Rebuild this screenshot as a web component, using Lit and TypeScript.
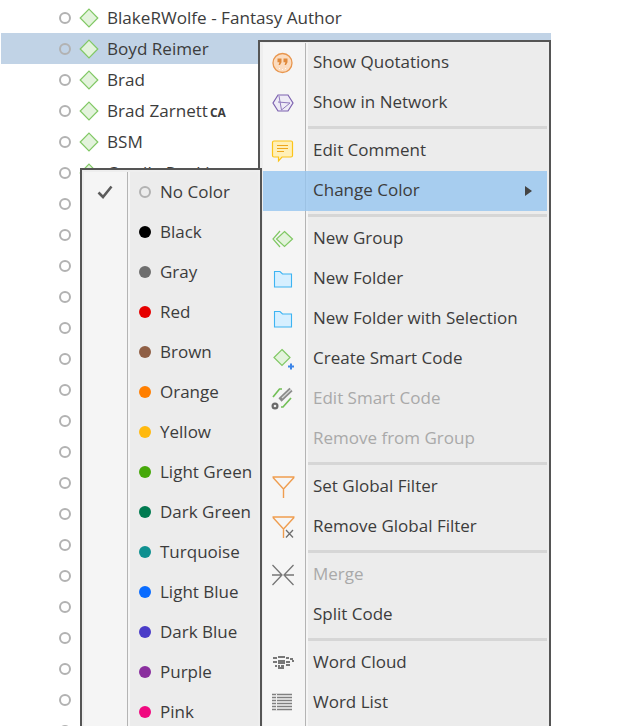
import { LitElement, html, css, svg } from "lit";
import { customElement } from "lit/decorators.js";

const diamond = html`<svg class="diamond" width="20" height="20" viewBox="0 0 20 20">
  <path d="M10 1.200 18.800 10 10 18.800 1.200 10Z" fill="#e3f3dc" stroke="#80c864" stroke-width="1.200" />
</svg>`;

const codes = ["BlakeRWolfe - Fantasy Author", "Boyd Reimer", "Brad", "Brad Zarnett", "BSM", "Camila Rankin"];
const extraRows = 18;

const colors = [
  ["No Color", ""],
  ["Black", "#000000"],
  ["Gray", "#6e6e6e"],
  ["Red", "#e60000"],
  ["Brown", "#8f5f45"],
  ["Orange", "#ff7f00"],
  ["Yellow", "#ffb90f"],
  ["Light Green", "#46a80a"],
  ["Dark Green", "#007a50"],
  ["Turquoise", "#0f9090"],
  ["Light Blue", "#0a6cff"],
  ["Dark Blue", "#4a3cc8"],
  ["Purple", "#8a2f9e"],
  ["Pink", "#f00a80"],
];

const icon = (body: unknown) =>
  html`<svg width="26" height="26" viewBox="0 0 26 26" fill="none">${body}</svg>`;

const folder = svg`<path d="M4.500 5.500H10L12.500 8H21.500V21H4.500Z" fill="#d6efff" stroke="#3db4f2" stroke-width="1.100" />`;

const funnel = svg`<path d="M2.500 3H24.500M3 3.500 13.500 15V24M24 3.500 13.500 15" stroke="#ef9d4f" stroke-width="1.400" />`;

const icons: Record<string, unknown> = {
  quote: icon(svg`<circle cx="12.500" cy="13" r="9.500" fill="#fbdcc0" stroke="#e8964e" stroke-width="1.300" />
    <path d="M7.500 8.500h4v3.700l-1.500 2.800H8.600l.8-2.800H7.500ZM13.500 8.500h4v3.700L16 15h-1.400l.8-2.800h-1.900Z" fill="#e08a3c" />
    <path d="M9 18.500h.8M12 19.500h.8M15 18.500h.8" stroke="#fff" stroke-width="1" />`),
  network: icon(svg`<path d="M8 5H18L23 13 18 21H8L3 13Z" stroke="#7d62b0" stroke-width="1.200" fill="#eeebf6" />
    <path d="M9 6 11.500 20 20 13 8 12" stroke="#8f79bd" stroke-width="1" />`),
  comment: icon(svg`<path d="M4 3H21Q22.500 3 22.500 4.500V17.500Q22.500 19 21 19H12L8.500 23V19H4Q2.500 19 2.500 17.500V4.500Q2.500 3 4 3Z" fill="#fff0b8" stroke="#fcc419" stroke-width="1.200" />
    <path d="M7 7.500H18M7 10.500H18M7 13.500H14" stroke="#efa71d" stroke-width="1.100" />`),
  group: icon(svg`<path d="M14.500 5.500 22.500 13 14.500 20.500 6.500 13Z" fill="#e3f3dc" stroke="#80c864" stroke-width="1.200" />
    <path d="M10 5 3 13 10 21" stroke="#80c864" stroke-width="1.200" />`),
  folder: icon(folder),
  smart: icon(svg`<path d="M12 3.500 20 11.500 12 19.500 4 11.500Z" fill="#e3f3dc" stroke="#80c864" stroke-width="1.200" />
    <path d="M20 17.500h2v2h2v2h-2v2h-2v-2h-2v-2h2Z" fill="#3d85e8" />`),
  editSmart: icon(svg`<path d="M3 11 9.500 3H12M11 21H13L21 12" stroke="#72bf56" stroke-width="1.700" />
    <path d="M10 14 21 3.500" stroke="#8a8a8a" stroke-width="4.500" />
    <path d="M12 12 21 3.500" stroke="#d8d8d8" stroke-width="1.200" />
    <circle cx="5" cy="20" r="3.500" fill="#6a6a6a" /><circle cx="5" cy="20" r="1.300" fill="#eee" />`),
  filter: icon(funnel),
  unfilter: icon(svg`${funnel}
    <path d="M16 16 23 23.500M23 16 16 23.500" stroke="#6e6e6e" stroke-width="1.300" />`),
  merge: icon(svg`<path d="M2.500 3 12 13 2.500 23M23.500 3 14 13 23.500 23M2 13H11M15 13H24" stroke="#757575" stroke-width="1.300" />`),
  cloud: icon(svg`<path d="M3 8h4M8 7h7M16 8h3M20 9h3M3 12h4M8 11h7M16 12h4M22 11h2M8 13h7M5 16h2M8 16h2M11 16h3M8 18h6M16 15h4" stroke="#777" stroke-width="1.800" />`),
  list: icon(svg`<path d="M2 4.500H22M2 7.500H22M2 10.500H22M2 13.500H22M2 16.500H22M2 19.500H22" stroke="#808080" stroke-width="1.400" />
    <path d="M6.500 4V20.500" stroke="#eee" stroke-width="1" />`),
};

type Entry = { label?: string; icon?: string; off?: boolean; on?: boolean; sub?: boolean; sep?: boolean };

const menu: Entry[] = [
  { label: "Show Quotations", icon: "quote" },
  { label: "Show in Network", icon: "network" },
  { sep: true },
  { label: "Edit Comment", icon: "comment" },
  { label: "Change Color", on: true, sub: true },
  { sep: true },
  { label: "New Group", icon: "group" },
  { label: "New Folder", icon: "folder" },
  { label: "New Folder with Selection", icon: "folder" },
  { label: "Create Smart Code", icon: "smart" },
  { label: "Edit Smart Code", icon: "editSmart", off: true },
  { label: "Remove from Group", off: true },
  { sep: true },
  { label: "Set Global Filter", icon: "filter" },
  { label: "Remove Global Filter", icon: "unfilter" },
  { sep: true },
  { label: "Merge", icon: "merge", off: true },
  { label: "Split Code" },
  { sep: true },
  { label: "Word Cloud", icon: "cloud" },
  { label: "Word List", icon: "list" },
];

@customElement("app-root")
export class AppRoot extends LitElement {
  static styles = css`
    :host {
      display: block;
      position: relative;
      width: 619px;
      height: 726px;
      overflow: hidden;
      background: #fff;
      font-family: "Open Sans", "Noto Sans", sans-serif;
      font-size: 17px;
      color: #3c3c3c;
    }
    .tree {
      padding-top: 2px;
      width: 550px;
      margin-left: 1px;
      font-size: 17.100px;
    }
    .row {
      height: 31px;
      display: flex;
      align-items: center;
      padding-left: 58px;
      box-sizing: border-box;
    }
    .row.sel {
      background: #c1d3e6;
    }
    .radio {
      width: 8px;
      height: 8px;
      border: 2px solid #b2b2b2;
      border-radius: 50%;
      flex: none;
    }
    .diamond {
      margin-left: 8px;
      margin-right: 8px;
      flex: none;
    }
    .tag {
      font-size: 12px;
      font-weight: 700;
      margin-left: 2px;
      margin-top: 3px;
    }
    .menu {
      position: absolute;
      box-sizing: border-box;
      border: 2px solid #555;
      background: #eeeeee;
      padding: 1px 2px 0 3px;
    }
    .main {
      left: 258px;
      top: 40px;
      width: 293px;
      height: 700px;
    }
    .colors {
      left: 80px;
      top: 168px;
      width: 182px;
      height: 570px;
      border-width: 2.500px;
      padding: 1.500px 2px 0 1.500px;
    }
    .items {
      background: linear-gradient(
        to right,
        #f5f5f5 0 42px,
        #b4b4b4 42px 43px,
        #f5f5f5 43px 45px,
        #ececec 45px
      );
      height: 100%;
    }
    .colors .items {
      background: linear-gradient(
        to right,
        #f5f5f5 0 43px,
        #b4b4b4 43px 44px,
        #f5f5f5 44px 46px,
        #ececec 46px
      );
    }
    .item {
      height: 40px;
      display: flex;
      align-items: center;
      position: relative;
    }
    .item.on {
      background: rgba(150, 197, 240, 0.8);
    }
    .item.off {
      color: #a9a9a9;
    }
    .ico {
      width: 40px;
      margin-right: 2px;
      display: flex;
      justify-content: center;
      flex: none;
    }
    .item .text {
      margin-left: 8px;
      padding-bottom: 4px;
    }
    .arrow {
      margin-left: auto;
      margin-right: 15px;
      width: 0;
      height: 0;
      border-left: 7px solid #444;
      border-top: 5.500px solid transparent;
      border-bottom: 5.500px solid transparent;
    }
    .sep {
      height: 3px;
      margin: 2.500px 0 2.500px 45px;
      background: #d6d6d6;
    }
    .check {
      width: 43px;
      display: flex;
      justify-content: center;
      flex: none;
    }
    .dot {
      width: 12px;
      height: 12px;
      border-radius: 50%;
      margin-left: 12px;
      margin-right: 9.500px;
      flex: none;
    }
    .dot.none {
      box-sizing: border-box;
      background: transparent;
      border: 2px solid #b2b2b2;
    }
    .swatch-label {
      white-space: nowrap;
    }
  `;

  renderMenuEntry(e: Entry) {
    if (e.sep) return html`<div class="sep"></div>`;
    return html`<div class="item ${e.on ? "on" : ""} ${e.off ? "off" : ""}">
      <span class="ico">${e.icon ? icons[e.icon] : ""}</span>
      <span class="text">${e.label}</span>
      ${e.sub ? html`<span class="arrow"></span>` : ""}
    </div>`;
  }

  render() {
    return html`
      <div class="tree">
        ${codes.map(
          (c, i) => html`<div class="row ${i === 1 ? "sel" : ""}">
            <span class="radio"></span>${diamond}<span>${c}</span>
            ${c === "Brad Zarnett" ? html`<span class="tag">CA</span>` : ""}
          </div>`
        )}
        ${Array.from({ length: extraRows }, () => html`<div class="row"><span class="radio"></span></div>`)}
      </div>
      <div class="menu main">
        <div class="items">${menu.map((e) => this.renderMenuEntry(e))}</div>
      </div>
      <div class="menu colors">
        <div class="items">
          ${colors.map(
            ([name, color], i) => html`<div class="item">
              <span class="check">
                ${i === 0
                  ? html`<svg width="16" height="14" viewBox="0 0 16 14">
                      <path d="M1.500 7.500 6 12 14.500 1.500" fill="none" stroke="#5c5c5c" stroke-width="2.600" />
                    </svg>`
                  : ""}
              </span>
              <span class="dot ${color ? "" : "none"}" style=${color ? `background:${color}` : ""}></span>
              <span class="swatch-label">${name}</span>
            </div>`
          )}
        </div>
      </div>
    `;
  }
}
